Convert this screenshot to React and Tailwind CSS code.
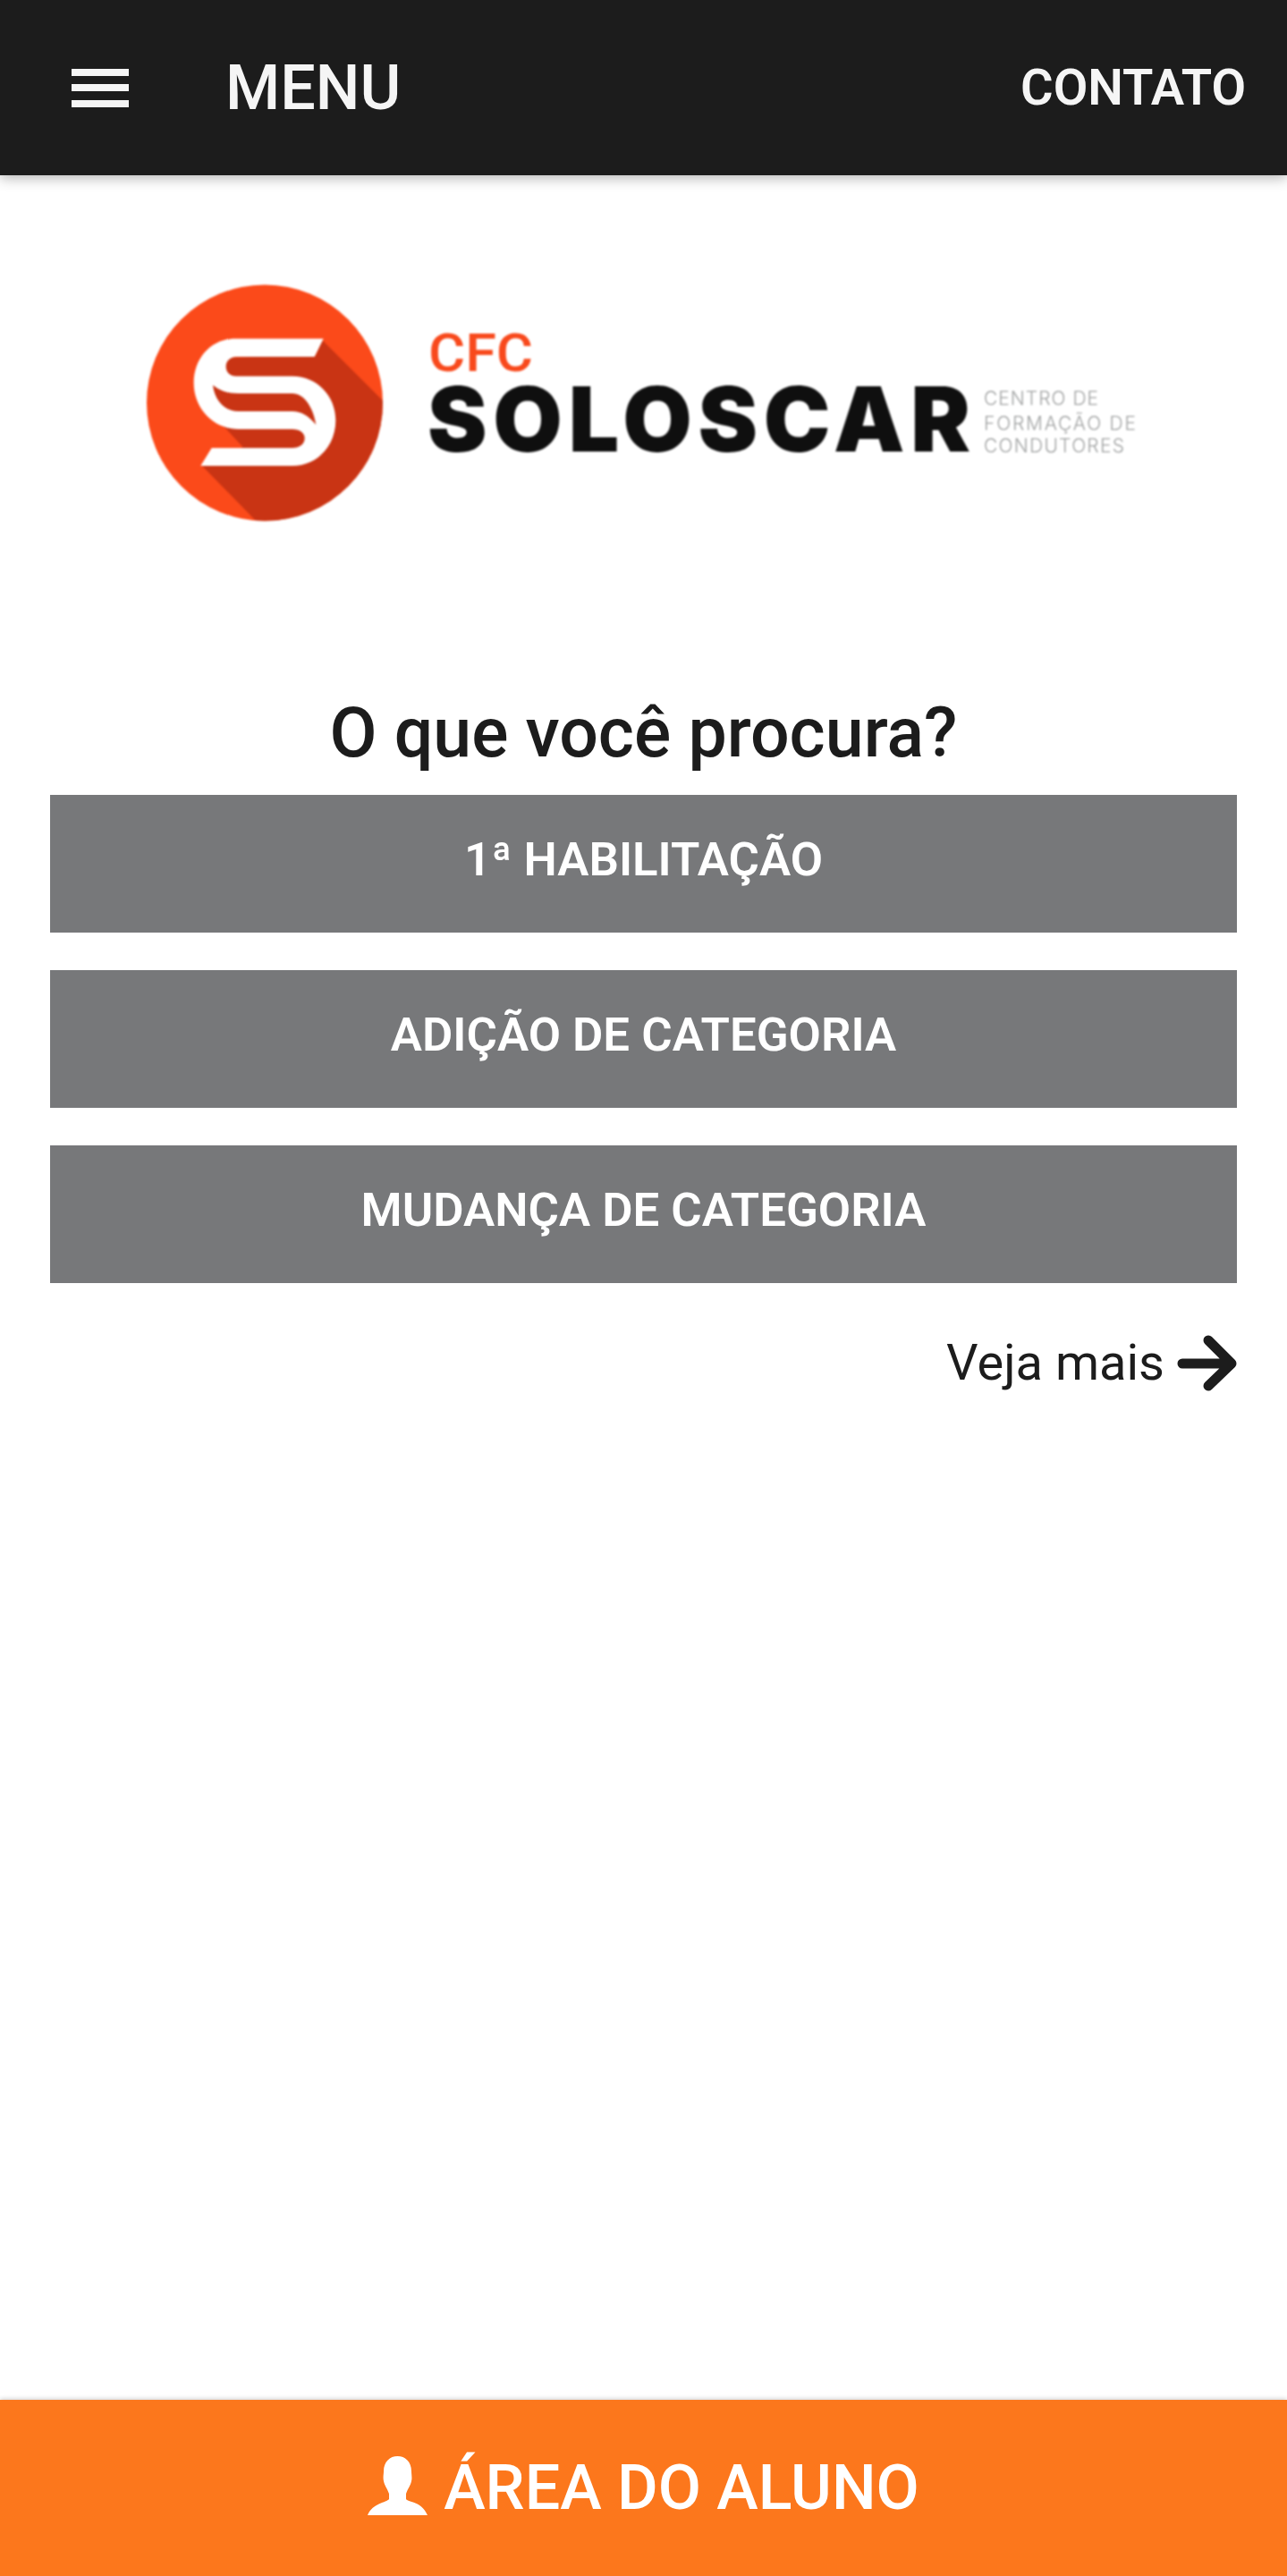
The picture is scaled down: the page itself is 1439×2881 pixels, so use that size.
const roboto = "font-['Roboto',sans-serif]";

function Logo() {
  return (
    <svg viewBox="160 310 1120 280" width="1120" height="280" className="block mx-auto blur-[0.8px]">
      <defs>
        <clipPath id="c">
          <circle cx="296" cy="450.5" r="132" />
        </clipPath>
      </defs>
      <circle cx="296" cy="450.5" r="132" fill="#fb4a1a" />
      <g clipPath="url(#c)">
        <g transform="translate(140 300) scale(0.33333)">
          <polygon
            fill="#c93414"
            points="660,240 900,480 900,900 480,890 255,660 395,600 330,530 290,380 340,300 640,290"
          />
          <path
            fill="#fff"
            d="M665 236 L635 297 L372 297 C352 297 338 312 338 330 C338 349 352 362 372 362 L560 362 C645 362 706 430 706 510 C706 595 645 663 560 663 L253 663 L290 603 L560 603 C585 603 602 590 602 570 C602 552 585 540 560 540 L380 540 C295 540 230 470 230 385 C230 300 290 236 370 236 Z"
          />
          <path
            fill="#c93414"
            d="M294 392 C320 412 345 420 380 420 L560 420 C600 420 630 465 640 525 C615 495 590 480 560 480 L380 480 C335 480 300 445 294 392 Z"
          />
        </g>
      </g>
      <text x="479" y="415" textLength="117" lengthAdjust="spacingAndGlyphs" fontFamily="Roboto, sans-serif" fontWeight="500" fontSize="60" fill="#f8491c">CFC</text>
      <text x="478" y="505" textLength="607" lengthAdjust="spacing" fontFamily="Inter, sans-serif" fontWeight="900" fontSize="100" fill="#0f0f0f">SOLOSCAR</text>
      <g fontFamily="Inter, sans-serif" fontWeight="300" fontSize="21" fill="#a0a2a2">
        <text x="1100" y="453" textLength="128" lengthAdjust="spacing">CENTRO DE</text>
        <text x="1100" y="481" textLength="170" lengthAdjust="spacing">FORMAÇÃO DE</text>
        <text x="1100" y="506" textLength="157" lengthAdjust="spacing">CONDUTORES</text>
      </g>
    </svg>
  );
}

function OptionButton({ label }) {
  return (
    <a className="flex h-[154px] items-center justify-center bg-[#77787a] pb-[8px] text-[52.7px] font-semibold text-white">
      {label}
    </a>
  );
}

export default function App() {
  return (
    <div className={`${roboto} flex h-[2881px] flex-col bg-white text-[#1c1c1c]`}>
      <header className="flex h-[196px] shrink-0 items-center bg-[#1c1c1c] pl-[80px] pr-[46px] text-[#f5f5f5] shadow-[0_3px_14px_rgba(0,0,0,0.3)]">
        <div className="flex h-[43px] w-[64px] flex-col justify-between">
          <span className="block h-[8px] bg-[#f5f5f5]" />
          <span className="block h-[8px] bg-[#f5f5f5]" />
          <span className="block h-[8px] bg-[#f5f5f5]" />
        </div>
        <span className="ml-[108px] text-[70px] font-medium leading-none">MENU</span>
        <span className="ml-auto text-[56px] font-semibold leading-none">CONTATO</span>
      </header>

      <main className="flex flex-col px-[56px]">
        <div className="-mx-[56px] mt-[114px]">
          <Logo />
        </div>
        <h1 className="mt-[188px] text-center text-[77px] font-medium leading-[84px]">O que você procura?</h1>
        <div className="mt-[27px] flex flex-col gap-[42px]">
          <OptionButton label="1ª HABILITAÇÃO" />
          <OptionButton label="ADIÇÃO DE CATEGORIA" />
          <OptionButton label="MUDANÇA DE CATEGORIA" />
        </div>
        <a className="mt-[56px] flex items-center justify-end gap-[14px] text-[56px] leading-[66px]">
          <span>Veja mais</span>
          <svg viewBox="0 0 67 63" width="67" height="63" fill="none" stroke="#1c1c1c" strokeWidth="11" strokeLinecap="round" strokeLinejoin="round">
            <path d="M6 32 H60 M35 6 L61 32 L35 57" />
          </svg>
        </a>
      </main>

      <a className="mt-auto flex h-[197px] shrink-0 items-center justify-center gap-[18px] bg-[#fc771c] text-[70px] font-medium text-white shadow-[0_-1px_5px_rgba(0,0,0,0.2)]">
        <svg viewBox="0 0 67 66" width="67" height="66" fill="#fff" className="mb-[6px]">
          <path d="M33.5 0 C42 0 49 6 49 17 C49 20 50 25 49 28 C48 33 45 36 43 42 L43 48 C46 52 60 50 67 66 L0 66 C6 52 21 52 24 48 L24 42 C22 36 19 33 18 28 C17 24 18 20 18 17 C18 6 25 0 33.5 0 Z" />
        </svg>
        <span>ÁREA DO ALUNO</span>
      </a>
    </div>
  );
}
